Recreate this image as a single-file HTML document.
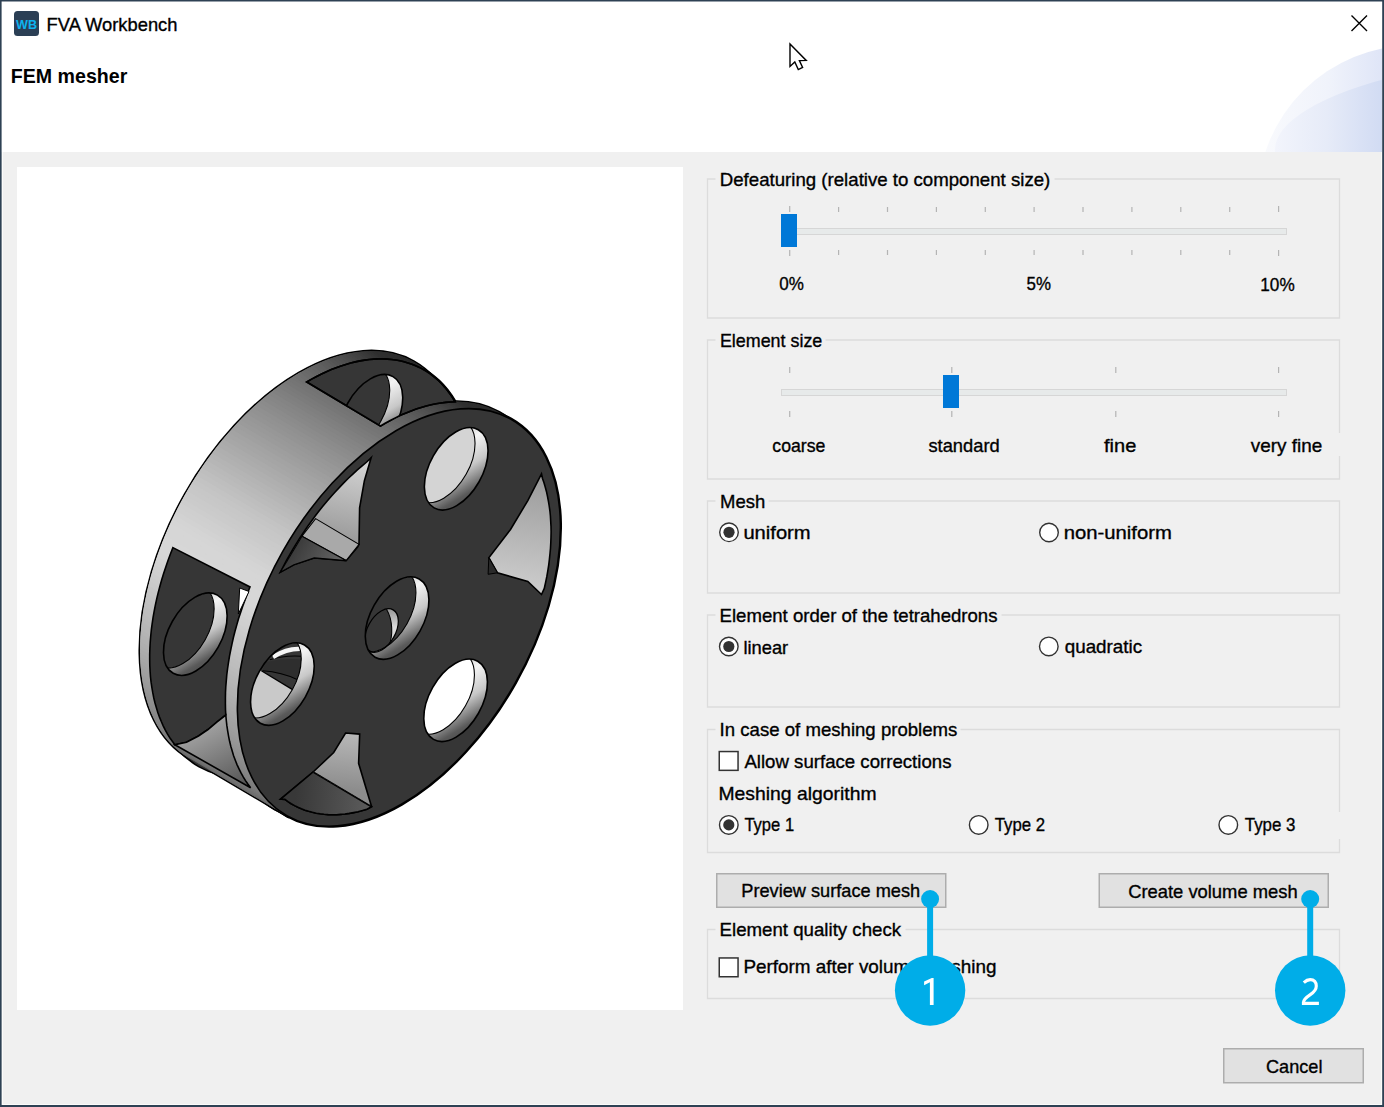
<!DOCTYPE html>
<html><head><meta charset="utf-8"><title>FEM mesher</title>
<style>html,body{margin:0;padding:0;background:#f0f0f0;} svg{display:block;} text{font-family:"Liberation Sans",sans-serif;}</style>
</head><body>
<svg width="1384" height="1107" viewBox="0 0 1384 1107">
<rect x="0" y="0" width="1384" height="152" fill="#ffffff"/>
<defs>
<linearGradient id="decoA" gradientUnits="userSpaceOnUse" x1="1262" y1="0" x2="1382" y2="0"><stop offset="0" stop-color="#f9fafd"/><stop offset="0.55" stop-color="#f0f3fb"/><stop offset="1" stop-color="#dfe5f7"/></linearGradient>
<linearGradient id="decoB" gradientUnits="userSpaceOnUse" x1="1272" y1="0" x2="1382" y2="0"><stop offset="0" stop-color="#f3f5fc"/><stop offset="0.5" stop-color="#e6ebf8"/><stop offset="1" stop-color="#d1dbf3"/></linearGradient>
<clipPath id="hdrclip"><rect x="0" y="0" width="1382" height="152"/></clipPath>
</defs>
<g clip-path="url(#hdrclip)">
<ellipse cx="1413.7" cy="200" rx="156" ry="154.8" fill="url(#decoA)"/>
<ellipse cx="1700" cy="150" rx="425" ry="106" fill="url(#decoB)"/>
</g>
<rect x="0" y="152" width="1384" height="955" fill="#f0f0f0"/>
<rect x="0" y="0" width="1384" height="1.5" fill="#2e4154"/>
<rect x="2" y="152" width="1" height="953" fill="#fbfbfa"/>
<rect x="1381" y="152" width="1" height="953" fill="#fbfbfa"/>
<rect x="2" y="1104" width="1380" height="1" fill="#fbfbfa"/>
<rect x="0" y="0" width="1.6" height="1107" fill="#2e4154"/>
<rect x="1382.2" y="0" width="1.8" height="1107" fill="#2e4154"/>
<rect x="0" y="1105" width="1384" height="2" fill="#2e4154"/>
<rect x="14" y="11" width="25" height="25" rx="3.5" fill="#2b3f55"/>
<text x="16" y="29.2" font-size="13" font-weight="700" fill="#0db3ef" textLength="21" lengthAdjust="spacingAndGlyphs">WB</text>
<text x="46.6" y="31.0" font-size="19" font-weight="400" fill="#000" stroke="#000" stroke-width="0.35" textLength="130.9" lengthAdjust="spacingAndGlyphs">FVA Workbench</text>
<path d="M1351.5 15.5 L1367 31 M1367 15.5 L1351.5 31" stroke="#000" stroke-width="1.4" fill="none"/>
<text x="10.8" y="82.5" font-size="21" font-weight="700" fill="#000" stroke="#000" stroke-width="0.0" textLength="116.5" lengthAdjust="spacingAndGlyphs">FEM mesher</text>
<rect x="17" y="167" width="666" height="843" fill="#ffffff"/>
<g id="model"><defs><linearGradient id="lwin" gradientUnits="userSpaceOnUse" x1="200" y1="722" x2="235" y2="790"><stop offset="0" stop-color="#a8a8a8"/><stop offset="1" stop-color="#565656"/></linearGradient><clipPath id="tcclip"><path d="M306.7 382.0 L311.6 379.1 L316.6 376.5 L321.5 374.0 L326.4 371.7 L331.3 369.6 L336.1 367.7 L341.0 366.0 L345.8 364.4 L350.6 363.1 L355.3 361.9 L360.1 360.9 L364.7 360.1 L369.3 359.5 L373.9 359.1 L378.4 358.9 L382.8 358.9 L387.2 359.1 L391.5 359.5 L395.8 360.0 L399.9 360.8 L404.0 361.7 L408.0 362.9 L411.9 364.2 L415.7 365.7 L419.4 367.4 L423.0 369.3 L426.5 371.4 L429.9 373.7 L433.1 376.1 L436.3 378.7 L439.4 381.5 L442.3 384.5 L445.1 387.6 L447.8 390.9 L450.4 394.4 L452.8 398.0 L455.1 401.8 L455.1 401.8 L450.5 402.0 L445.7 402.4 L440.9 403.0 L436.1 403.8 L431.2 404.8 L426.2 406.0 L421.2 407.4 L416.2 409.0 L411.1 410.9 L406.1 412.9 L401.0 415.1 L395.8 417.6 L390.7 420.2 L385.6 423.0 L380.5 426.0 Z"/></clipPath><clipPath id="h1c"><ellipse cx="370.9" cy="415.7" rx="44.9" ry="26.3" transform="rotate(-60.5 370.9 415.7)" fill="#fff" stroke="none" stroke-width="0"/></clipPath><linearGradient id="h1g" gradientUnits="userSpaceOnUse" x1="393.0" y1="376.7" x2="348.8" y2="454.7"><stop offset="0" stop-color="#b0b0b0"/><stop offset="0.3" stop-color="#f4f4f4"/><stop offset="0.55" stop-color="#c8c8c8"/><stop offset="0.8" stop-color="#5a5a5a"/><stop offset="1" stop-color="#3c3c3c"/></linearGradient><clipPath id="lcclip"><path d="M172.9 547.6 L250.0 587.0 L247.5 593.3 L245.1 599.6 L242.8 605.9 L240.7 612.3 L238.6 618.6 L236.8 624.9 L235.0 631.2 L233.4 637.5 L232.0 643.8 L230.7 650.0 L229.5 656.2 L228.5 662.4 L227.6 668.5 L226.8 674.6 L226.3 680.6 L225.8 686.5 L225.5 692.4 L225.4 698.2 L225.4 703.9 L225.5 709.5 L225.8 715.0 L216.5 722.3 L208.0 729.5 L198.5 736.0 L186.5 742.2 L174.9 744.8 L172.3 741.3 L169.8 737.7 L167.4 733.9 L165.2 729.9 L163.2 725.8 L161.3 721.5 L159.5 717.1 L157.8 712.5 L156.4 707.8 L155.0 703.0 L153.8 698.0 L152.8 692.9 L151.9 687.7 L151.1 682.4 L150.5 677.0 L150.1 671.4 L149.8 665.8 L149.7 660.1 L149.7 654.3 L149.9 648.4 L150.2 642.4 L150.7 636.3 L151.3 630.2 L152.1 624.1 L153.0 617.9 L154.1 611.6 L155.3 605.3 L156.7 598.9 L158.2 592.6 L159.9 586.2 L161.7 579.7 L163.7 573.3 L165.8 566.9 L168.0 560.5 L170.4 554.0 L172.9 547.6 Z"/></clipPath><clipPath id="h2c"><ellipse cx="195.3" cy="634.2" rx="44.9" ry="26.3" transform="rotate(-60.5 195.3 634.2)" fill="#fff" stroke="none" stroke-width="0"/></clipPath><linearGradient id="h2g" gradientUnits="userSpaceOnUse" x1="217.4" y1="595.2" x2="173.2" y2="673.2"><stop offset="0" stop-color="#b0b0b0"/><stop offset="0.3" stop-color="#f4f4f4"/><stop offset="0.55" stop-color="#c8c8c8"/><stop offset="0.8" stop-color="#5a5a5a"/><stop offset="1" stop-color="#3c3c3c"/></linearGradient><linearGradient id="wul" gradientUnits="userSpaceOnUse" x1="368" y1="462" x2="350" y2="545"><stop offset="0" stop-color="#d4d4d4"/><stop offset="1" stop-color="#989898"/></linearGradient><linearGradient id="wuld" gradientUnits="userSpaceOnUse" x1="295" y1="545" x2="335" y2="568"><stop offset="0" stop-color="#3a3a3a"/><stop offset="1" stop-color="#646464"/></linearGradient><linearGradient id="wr" gradientUnits="userSpaceOnUse" x1="540" y1="475" x2="520" y2="590"><stop offset="0" stop-color="#9a9a9a"/><stop offset="1" stop-color="#cdcdcd"/></linearGradient><linearGradient id="wb" gradientUnits="userSpaceOnUse" x1="350" y1="735" x2="345" y2="790"><stop offset="0" stop-color="#b6b6b6"/><stop offset="1" stop-color="#8c8c8c"/></linearGradient><linearGradient id="wbd" gradientUnits="userSpaceOnUse" x1="295" y1="800" x2="370" y2="805"><stop offset="0" stop-color="#383838"/><stop offset="1" stop-color="#5c5c5c"/></linearGradient><clipPath id="h3c"><ellipse cx="456.2" cy="468.8" rx="44.9" ry="26.3" transform="rotate(-60.5 456.2 468.8)" fill="#fff" stroke="none" stroke-width="0"/></clipPath><linearGradient id="h3g" gradientUnits="userSpaceOnUse" x1="478.3" y1="429.8" x2="434.1" y2="507.8"><stop offset="0" stop-color="#b0b0b0"/><stop offset="0.3" stop-color="#f4f4f4"/><stop offset="0.55" stop-color="#c8c8c8"/><stop offset="0.8" stop-color="#5a5a5a"/><stop offset="1" stop-color="#3c3c3c"/></linearGradient><clipPath id="h4c"><ellipse cx="455.6" cy="700.3" rx="44.9" ry="26.3" transform="rotate(-60.5 455.6 700.3)" fill="#fff" stroke="none" stroke-width="0"/></clipPath><linearGradient id="h4g" gradientUnits="userSpaceOnUse" x1="477.7" y1="661.3" x2="433.5" y2="739.3"><stop offset="0" stop-color="#b0b0b0"/><stop offset="0.3" stop-color="#f4f4f4"/><stop offset="0.55" stop-color="#c8c8c8"/><stop offset="0.8" stop-color="#5a5a5a"/><stop offset="1" stop-color="#3c3c3c"/></linearGradient><clipPath id="cic"><ellipse cx="381.5" cy="630.5" rx="23.7" ry="13.9" transform="rotate(-60.5 381.5 630.5)" fill="#fff" stroke="none" stroke-width="0"/></clipPath><linearGradient id="cig" gradientUnits="userSpaceOnUse" x1="392" y1="610" x2="392" y2="646"><stop offset="0" stop-color="#9a9a9a"/><stop offset="0.5" stop-color="#dedede"/><stop offset="1" stop-color="#c8c8c8"/></linearGradient><clipPath id="h5c"><ellipse cx="397.1" cy="618.1" rx="44.9" ry="26.3" transform="rotate(-60.5 397.1 618.1)" fill="#fff" stroke="none" stroke-width="0"/></clipPath><linearGradient id="h5g" gradientUnits="userSpaceOnUse" x1="419.2" y1="579.1" x2="375.0" y2="657.1"><stop offset="0" stop-color="#b0b0b0"/><stop offset="0.3" stop-color="#f4f4f4"/><stop offset="0.55" stop-color="#c8c8c8"/><stop offset="0.8" stop-color="#5a5a5a"/><stop offset="1" stop-color="#3c3c3c"/></linearGradient><clipPath id="h5bc"><ellipse cx="384.1" cy="610.7" rx="44.9" ry="26.3" transform="rotate(-60.5 384.1 610.7)" fill="#fff" stroke="none" stroke-width="0"/></clipPath><clipPath id="h6c"><ellipse cx="282.4" cy="684.1" rx="44.9" ry="26.3" transform="rotate(-60.5 282.4 684.1)" fill="#fff" stroke="none" stroke-width="0"/></clipPath><linearGradient id="h6g" gradientUnits="userSpaceOnUse" x1="304.5" y1="645.1" x2="260.3" y2="723.1"><stop offset="0" stop-color="#b0b0b0"/><stop offset="0.3" stop-color="#f4f4f4"/><stop offset="0.55" stop-color="#c8c8c8"/><stop offset="0.8" stop-color="#5a5a5a"/><stop offset="1" stop-color="#3c3c3c"/></linearGradient><clipPath id="h6bc"><ellipse cx="269.4" cy="676.7" rx="44.9" ry="26.3" transform="rotate(-60.5 269.4 676.7)" fill="#fff" stroke="none" stroke-width="0"/></clipPath></defs>
<ellipse cx="301.6" cy="560.0" rx="227.7" ry="133.6" transform="rotate(-60.5 301.6 560.0)" fill="#000" stroke="#000" stroke-width="3.2"/>
<ellipse cx="311.2" cy="567.7" rx="227.7" ry="133.6" transform="rotate(-60.5 311.2 567.7)" fill="#000" stroke="#000" stroke-width="3.2"/>
<ellipse cx="386.9" cy="610.6" rx="227.7" ry="133.6" transform="rotate(-60.5 386.9 610.6)" fill="#000" stroke="#000" stroke-width="3.2"/>
<ellipse cx="398.9" cy="617.4" rx="227.7" ry="133.6" transform="rotate(-60.5 398.9 617.4)" fill="#000" stroke="#000" stroke-width="3.2"/>
<path d="M190.6 758.8 L287.9 816.2 L398.9 617.4 L301.6 560.0 Z" fill="#000" stroke="#000" stroke-width="3.2"/>
<ellipse cx="301.6" cy="560.0" rx="227.7" ry="133.6" transform="rotate(-60.5 301.6 560.0)" fill="#363636" stroke="none" stroke-width="0"/>
<ellipse cx="311.2" cy="567.7" rx="227.7" ry="133.6" transform="rotate(-60.5 311.2 567.7)" fill="#363636" stroke="none" stroke-width="0"/>
<ellipse cx="386.9" cy="610.6" rx="227.7" ry="133.6" transform="rotate(-60.5 386.9 610.6)" fill="#363636" stroke="none" stroke-width="0"/>
<ellipse cx="398.9" cy="617.4" rx="227.7" ry="133.6" transform="rotate(-60.5 398.9 617.4)" fill="#363636" stroke="none" stroke-width="0"/>
<path d="M190.6 758.8 L287.9 816.2 L398.9 617.4 L301.6 560.0 Z" fill="#363636"/>
<polygon points="190.6,758.8 186.0,756.1 283.3,813.5 287.9,816.2" fill="#666666"/>
<polygon points="188.3,757.5 183.8,754.7 281.1,812.1 285.6,814.9" fill="#686868"/>
<polygon points="186.0,756.1 181.6,753.1 278.9,810.5 283.3,813.5" fill="#6a6a6a"/>
<polygon points="183.8,754.7 179.5,751.5 276.8,808.9 281.1,812.1" fill="#6b6b6b"/>
<polygon points="181.6,753.1 177.4,749.8 274.7,807.2 278.9,810.5" fill="#6d6d6d"/>
<polygon points="179.5,751.5 175.4,748.0 272.7,805.4 276.8,808.9" fill="#6e6e6e"/>
<polygon points="177.4,749.8 173.4,746.1 270.7,803.5 274.7,807.2" fill="#707070"/>
<polygon points="175.4,748.0 171.4,744.2 268.7,801.6 272.7,805.4" fill="#717171"/>
<polygon points="173.4,746.1 169.6,742.2 266.9,799.6 270.7,803.5" fill="#737373"/>
<polygon points="171.4,744.2 167.7,740.1 265.0,797.5 268.7,801.6" fill="#747474"/>
<polygon points="169.6,742.2 165.9,738.0 263.2,795.4 266.9,799.6" fill="#767676"/>
<polygon points="167.7,740.1 164.2,735.8 261.5,793.2 265.0,797.5" fill="#787878"/>
<polygon points="165.9,738.0 162.6,733.5 259.9,790.9 263.2,795.4" fill="#797979"/>
<polygon points="164.2,735.8 160.9,731.1 258.2,788.5 261.5,793.2" fill="#7b7b7b"/>
<polygon points="162.6,733.5 159.4,728.7 256.7,786.1 259.9,790.9" fill="#7c7c7c"/>
<polygon points="160.9,731.1 157.9,726.2 255.2,783.6 258.2,788.5" fill="#7e7e7e"/>
<polygon points="159.4,728.7 156.4,723.7 253.7,781.1 256.7,786.1" fill="#7f7f7f"/>
<polygon points="157.9,726.2 155.1,721.1 252.4,778.5 255.2,783.6" fill="#818181"/>
<polygon points="156.4,723.7 153.7,718.4 251.0,775.8 253.7,781.1" fill="#838383"/>
<polygon points="155.1,721.1 152.5,715.6 249.8,773.0 252.4,778.5" fill="#848484"/>
<polygon points="153.7,718.4 151.2,712.8 248.5,770.2 251.0,775.8" fill="#868686"/>
<polygon points="152.5,715.6 150.1,709.9 247.4,767.3 249.8,773.0" fill="#878787"/>
<polygon points="151.2,712.8 149.0,707.0 246.3,764.4 248.5,770.2" fill="#898989"/>
<polygon points="150.1,709.9 148.0,704.0 245.3,761.4 247.4,767.3" fill="#8b8b8b"/>
<polygon points="149.0,707.0 147.0,701.0 244.3,758.4 246.3,764.4" fill="#8d8d8d"/>
<polygon points="148.0,704.0 146.1,697.9 243.4,755.3 245.3,761.4" fill="#8f8f8f"/>
<polygon points="147.0,701.0 145.3,694.7 242.6,752.1 244.3,758.4" fill="#909090"/>
<polygon points="146.1,697.9 144.5,691.5 241.8,748.9 243.4,755.3" fill="#929292"/>
<polygon points="145.3,694.7 143.8,688.2 241.1,745.6 242.6,752.1" fill="#949494"/>
<polygon points="144.5,691.5 143.1,684.9 240.4,742.3 241.8,748.9" fill="#969696"/>
<polygon points="143.8,688.2 142.5,681.5 239.8,738.9 241.1,745.6" fill="#989898"/>
<polygon points="143.1,684.9 142.0,678.1 239.3,735.5 240.4,742.3" fill="#9a9a9a"/>
<polygon points="142.5,681.5 141.5,674.7 238.8,732.1 239.8,738.9" fill="#9c9c9c"/>
<polygon points="142.0,678.1 141.1,671.1 238.4,728.5 239.3,735.5" fill="#9e9e9e"/>
<polygon points="141.5,674.7 140.8,667.6 238.1,725.0 238.8,732.1" fill="#a0a0a0"/>
<polygon points="141.1,671.1 140.5,664.0 237.8,721.4 238.4,728.5" fill="#a1a1a1"/>
<polygon points="140.8,667.6 140.3,660.4 237.6,717.8 238.1,725.0" fill="#a3a3a3"/>
<polygon points="140.5,664.0 140.2,656.7 237.5,714.1 237.8,721.4" fill="#a5a5a5"/>
<polygon points="140.3,660.4 140.1,653.0 237.4,710.4 237.6,717.8" fill="#a7a7a7"/>
<polygon points="140.2,656.7 140.1,649.2 237.4,706.6 237.5,714.1" fill="#a9a9a9"/>
<polygon points="140.1,653.0 140.1,645.4 237.4,702.8 237.4,710.4" fill="#ababab"/>
<polygon points="140.1,649.2 140.2,641.6 237.5,699.0 237.4,706.6" fill="#adadad"/>
<polygon points="140.1,645.4 140.4,637.8 237.7,695.2 237.4,702.8" fill="#afafaf"/>
<polygon points="140.2,641.6 140.7,633.9 238.0,691.3 237.5,699.0" fill="#b1b1b1"/>
<polygon points="140.4,637.8 141.0,630.0 238.3,687.4 237.7,695.2" fill="#b2b2b2"/>
<polygon points="140.7,633.9 141.3,626.0 238.6,683.4 238.0,691.3" fill="#b4b4b4"/>
<polygon points="141.0,630.0 141.8,622.0 239.1,679.4 238.3,687.4" fill="#b6b6b6"/>
<polygon points="141.3,626.0 142.3,618.0 239.6,675.4 238.6,683.4" fill="#b7b7b7"/>
<polygon points="141.8,622.0 142.8,614.0 240.1,671.4 239.1,679.4" fill="#b9b9b9"/>
<polygon points="142.3,618.0 143.4,610.0 240.7,667.4 239.6,675.4" fill="#bbbbbb"/>
<polygon points="142.8,614.0 144.1,605.9 241.4,663.3 240.1,671.4" fill="#bdbdbd"/>
<polygon points="143.4,610.0 144.9,601.9 242.2,659.3 240.7,667.4" fill="#bebebe"/>
<polygon points="144.1,605.9 145.7,597.8 243.0,655.2 241.4,663.3" fill="#c0c0c0"/>
<polygon points="144.9,601.9 146.6,593.7 243.9,651.1 242.2,659.3" fill="#c2c2c2"/>
<polygon points="145.7,597.8 147.5,589.5 244.8,646.9 243.0,655.2" fill="#c4c4c4"/>
<polygon points="146.6,593.7 148.5,585.4 245.8,642.8 243.9,651.1" fill="#c6c6c6"/>
<polygon points="147.5,589.5 149.6,581.3 246.9,638.7 244.8,646.9" fill="#c7c7c7"/>
<polygon points="148.5,585.4 150.7,577.1 248.0,634.5 245.8,642.8" fill="#c9c9c9"/>
<polygon points="149.6,581.3 151.9,572.9 249.2,630.3 246.9,638.7" fill="#cbcbcb"/>
<polygon points="150.7,577.1 153.1,568.8 250.4,626.2 248.0,634.5" fill="#cdcdcd"/>
<polygon points="151.9,572.9 154.4,564.6 251.7,622.0 249.2,630.3" fill="#cfcfcf"/>
<polygon points="153.1,568.8 155.8,560.4 253.1,617.8 250.4,626.2" fill="#d0d0d0"/>
<polygon points="154.4,564.6 157.2,556.3 254.5,613.7 251.7,622.0" fill="#d2d2d2"/>
<polygon points="155.8,560.4 158.7,552.1 256.0,609.5 253.1,617.8" fill="#d4d4d4"/>
<polygon points="157.2,556.3 160.2,547.9 257.5,605.3 254.5,613.7" fill="#d6d6d6"/>
<polygon points="158.7,552.1 161.8,543.8 259.1,601.2 256.0,609.5" fill="#d7d7d7"/>
<polygon points="160.2,547.9 163.4,539.6 260.7,597.0 257.5,605.3" fill="#d7d7d7"/>
<polygon points="161.8,543.8 165.1,535.5 262.4,592.9 259.1,601.2" fill="#d7d7d7"/>
<polygon points="163.4,539.6 166.9,531.3 264.2,588.7 260.7,597.0" fill="#d7d7d7"/>
<polygon points="165.1,535.5 168.7,527.2 266.0,584.6 262.4,592.9" fill="#d6d6d6"/>
<polygon points="166.9,531.3 170.5,523.1 267.8,580.5 264.2,588.7" fill="#d6d6d6"/>
<polygon points="168.7,527.2 172.5,519.0 269.8,576.4 266.0,584.6" fill="#d6d6d6"/>
<polygon points="170.5,523.1 174.4,514.9 271.7,572.3 267.8,580.5" fill="#d5d5d5"/>
<polygon points="172.5,519.0 176.4,510.9 273.7,568.3 269.8,576.4" fill="#d4d4d4"/>
<polygon points="174.4,514.9 178.5,506.8 275.8,564.2 271.7,572.3" fill="#d2d2d2"/>
<polygon points="176.4,510.9 180.6,502.8 277.9,560.2 273.7,568.3" fill="#d0d0d0"/>
<polygon points="178.5,506.8 182.8,498.8 280.1,556.2 275.8,564.2" fill="#cfcfcf"/>
<polygon points="180.6,502.8 185.0,494.8 282.3,552.2 277.9,560.2" fill="#cdcdcd"/>
<polygon points="182.8,498.8 187.2,490.9 284.5,548.3 280.1,556.2" fill="#cbcbcb"/>
<polygon points="185.0,494.8 189.5,486.9 286.8,544.3 282.3,552.2" fill="#cacaca"/>
<polygon points="187.2,490.9 191.9,483.1 289.2,540.5 284.5,548.3" fill="#c8c8c8"/>
<polygon points="189.5,486.9 194.3,479.2 291.6,536.6 286.8,544.3" fill="#c7c7c7"/>
<polygon points="191.9,483.1 196.7,475.4 294.0,532.8 289.2,540.5" fill="#c5c5c5"/>
<polygon points="194.3,479.2 199.2,471.6 296.5,529.0 291.6,536.6" fill="#c3c3c3"/>
<polygon points="196.7,475.4 201.7,467.8 299.0,525.2 294.0,532.8" fill="#c0c0c0"/>
<polygon points="199.2,471.6 204.2,464.1 301.5,521.5 296.5,529.0" fill="#bebebe"/>
<polygon points="201.7,467.8 206.8,460.4 304.1,517.8 299.0,525.2" fill="#bbbbbb"/>
<polygon points="204.2,464.1 209.5,456.8 306.8,514.2 301.5,521.5" fill="#b9b9b9"/>
<polygon points="206.8,460.4 212.1,453.2 309.4,510.6 304.1,517.8" fill="#b6b6b6"/>
<polygon points="209.5,456.8 214.8,449.6 312.1,507.0 306.8,514.2" fill="#b4b4b4"/>
<polygon points="212.1,453.2 217.6,446.1 314.9,503.5 309.4,510.6" fill="#b1b1b1"/>
<polygon points="214.8,449.6 220.4,442.6 317.7,500.0 312.1,507.0" fill="#afafaf"/>
<polygon points="217.6,446.1 223.2,439.2 320.5,496.6 314.9,503.5" fill="#acacac"/>
<polygon points="220.4,442.6 226.0,435.8 323.3,493.2 317.7,500.0" fill="#aaaaaa"/>
<polygon points="223.2,439.2 228.9,432.5 326.2,489.9 320.5,496.6" fill="#a7a7a7"/>
<polygon points="226.0,435.8 231.8,429.2 329.1,486.6 323.3,493.2" fill="#a5a5a5"/>
<polygon points="228.9,432.5 234.7,426.0 332.0,483.4 326.2,489.9" fill="#a3a3a3"/>
<polygon points="231.8,429.2 237.6,422.8 334.9,480.2 329.1,486.6" fill="#a0a0a0"/>
<polygon points="234.7,426.0 240.6,419.7 337.9,477.1 332.0,483.4" fill="#9e9e9e"/>
<polygon points="237.6,422.8 243.6,416.6 340.9,474.0 334.9,480.2" fill="#9b9b9b"/>
<polygon points="240.6,419.7 246.6,413.6 343.9,471.0 337.9,477.1" fill="#999999"/>
<polygon points="243.6,416.6 249.7,410.7 347.0,468.1 340.9,474.0" fill="#979797"/>
<polygon points="246.6,413.6 252.7,407.8 350.0,465.2 343.9,471.0" fill="#949494"/>
<polygon points="249.7,410.7 255.8,405.0 353.1,462.4 347.0,468.1" fill="#929292"/>
<polygon points="252.7,407.8 258.9,402.2 356.2,459.6 350.0,465.2" fill="#909090"/>
<polygon points="255.8,405.0 262.0,399.5 359.3,456.9 353.1,462.4" fill="#8d8d8d"/>
<polygon points="258.9,402.2 265.2,396.9 362.5,454.3 356.2,459.6" fill="#8b8b8b"/>
<polygon points="262.0,399.5 268.3,394.3 365.6,451.7 359.3,456.9" fill="#888888"/>
<polygon points="265.2,396.9 271.5,391.8 368.8,449.2 362.5,454.3" fill="#868686"/>
<polygon points="268.3,394.3 274.7,389.4 372.0,446.8 365.6,451.7" fill="#848484"/>
<polygon points="271.5,391.8 277.8,387.0 375.1,444.4 368.8,449.2" fill="#818181"/>
<polygon points="274.7,389.4 281.0,384.7 378.3,442.1 372.0,446.8" fill="#7f7f7f"/>
<polygon points="277.8,387.0 284.2,382.5 381.5,439.9 375.1,444.4" fill="#7c7c7c"/>
<polygon points="281.0,384.7 287.5,380.3 384.8,437.7 378.3,442.1" fill="#7a7a7a"/>
<polygon points="284.2,382.5 290.7,378.2 388.0,435.6 381.5,439.9" fill="#777777"/>
<polygon points="287.5,380.3 293.9,376.2 391.2,433.6 384.8,437.7" fill="#757575"/>
<polygon points="290.7,378.2 297.1,374.3 394.4,431.7 388.0,435.6" fill="#737373"/>
<polygon points="293.9,376.2 300.3,372.4 397.6,429.8 391.2,433.6" fill="#707070"/>
<polygon points="297.1,374.3 300.3,372.4 397.6,429.8 394.4,431.7" fill="#6e6e6e"/>
<polygon points="293.9,376.2 300.3,372.4 309.9,380.1 303.5,383.9" fill="#707070"/>
<polygon points="297.1,374.3 303.4,370.7 313.0,378.4 306.7,382.0" fill="#6e6e6e"/>
<polygon points="300.3,372.4 306.6,369.0 316.2,376.7 309.9,380.1" fill="#6b6b6b"/>
<polygon points="303.4,370.7 309.8,367.3 319.4,375.0 313.0,378.4" fill="#696969"/>
<polygon points="306.6,369.0 313.0,365.8 322.6,373.5 316.2,376.7" fill="#666666"/>
<polygon points="309.8,367.3 316.2,364.3 325.8,372.0 319.4,375.0" fill="#646464"/>
<polygon points="313.0,365.8 319.4,362.9 329.0,370.6 322.6,373.5" fill="#616161"/>
<polygon points="316.2,364.3 322.5,361.6 332.1,369.3 325.8,372.0" fill="#5f5f5f"/>
<polygon points="319.4,362.9 325.7,360.3 335.3,368.0 329.0,370.6" fill="#5c5c5c"/>
<polygon points="322.5,361.6 328.8,359.2 338.4,366.9 332.1,369.3" fill="#5a5a5a"/>
<polygon points="325.7,360.3 332.0,358.1 341.6,365.8 335.3,368.0" fill="#575757"/>
<polygon points="328.8,359.2 335.1,357.1 344.7,364.8 338.4,366.9" fill="#545454"/>
<polygon points="332.0,358.1 338.2,356.1 347.8,363.8 341.6,365.8" fill="#525252"/>
<polygon points="335.1,357.1 341.3,355.3 350.9,363.0 344.7,364.8" fill="#4f4f4f"/>
<polygon points="338.2,356.1 344.4,354.5 354.0,362.2 347.8,363.8" fill="#4d4d4d"/>
<polygon points="341.3,355.3 347.5,353.8 357.1,361.5 350.9,363.0" fill="#4a4a4a"/>
<polygon points="344.4,354.5 350.5,353.2 360.1,360.9 354.0,362.2" fill="#474747"/>
<polygon points="347.5,353.8 353.5,352.7 363.1,360.4 357.1,361.5" fill="#454545"/>
<polygon points="350.5,353.2 356.5,352.2 366.1,359.9 360.1,360.9" fill="#424242"/>
<polygon points="353.5,352.7 359.5,351.9 369.1,359.6 363.1,360.4" fill="#404040"/>
<polygon points="356.5,352.2 362.5,351.6 372.1,359.3 366.1,359.9" fill="#3d3d3d"/>
<polygon points="359.5,351.9 365.4,351.4 375.0,359.1 369.1,359.6" fill="#3a3a3a"/>
<polygon points="362.5,351.6 368.4,351.2 378.0,358.9 372.1,359.3" fill="#383838"/>
<polygon points="365.4,351.4 371.2,351.2 380.8,358.9 375.0,359.1" fill="#353535"/>
<polygon points="368.4,351.2 374.1,351.2 383.7,358.9 378.0,358.9" fill="#333333"/>
<polygon points="371.2,351.2 376.9,351.3 386.5,359.0 380.8,358.9" fill="#303030"/>
<polygon points="374.1,351.2 379.7,351.5 389.3,359.2 383.7,358.9" fill="#2f2f2f"/>
<polygon points="376.9,351.3 382.5,351.8 392.1,359.5 386.5,359.0" fill="#2f2f2f"/>
<polygon points="379.7,351.5 385.3,352.2 394.9,359.9 389.3,359.2" fill="#2e2e2e"/>
<polygon points="382.5,351.8 388.0,352.6 397.6,360.3 392.1,359.5" fill="#2e2e2e"/>
<polygon points="385.3,352.2 390.7,353.1 400.3,360.8 394.9,359.9" fill="#2d2d2d"/>
<polygon points="388.0,352.6 393.3,353.8 402.9,361.5 397.6,360.3" fill="#2d2d2d"/>
<polygon points="390.7,353.1 395.9,354.4 405.5,362.1 400.3,360.8" fill="#2c2c2c"/>
<polygon points="393.3,353.8 398.5,355.2 408.1,362.9 402.9,361.5" fill="#2c2c2c"/>
<polygon points="395.9,354.4 401.0,356.0 410.6,363.7 405.5,362.1" fill="#2b2b2b"/>
<polygon points="398.5,355.2 403.5,357.0 413.1,364.7 408.1,362.9" fill="#2b2b2b"/>
<polygon points="401.0,356.0 406.0,358.0 415.6,365.7 410.6,363.7" fill="#2a2a2a"/>
<polygon points="403.5,357.0 408.4,359.1 418.0,366.8 413.1,364.7" fill="#2a2a2a"/>
<polygon points="406.0,358.0 410.7,360.2 420.3,367.9 415.6,365.7" fill="#292929"/>
<polygon points="408.4,359.1 413.1,361.5 422.7,369.2 418.0,366.8" fill="#292929"/>
<polygon points="410.7,360.2 415.4,362.8 425.0,370.5 420.3,367.9" fill="#282828"/>
<polygon points="413.1,361.5 417.6,364.2 427.2,371.9 422.7,369.2" fill="#282828"/>
<polygon points="415.4,362.8 419.8,365.6 429.4,373.3 425.0,370.5" fill="#282828"/>
<polygon points="417.6,364.2 421.9,367.2 431.5,374.9 427.2,371.9" fill="#282828"/>
<polygon points="419.8,365.6 424.0,368.8 433.6,376.5 429.4,373.3" fill="#282828"/>
<polygon points="421.9,367.2 426.1,370.5 435.7,378.2 431.5,374.9" fill="#282828"/>
<polygon points="424.0,368.8 428.1,372.3 437.7,380.0 433.6,376.5" fill="#282828"/>
<polygon points="426.1,370.5 430.1,374.1 439.7,381.8 435.7,378.2" fill="#282828"/>
<polygon points="428.1,372.3 432.0,376.0 441.6,383.7 437.7,380.0" fill="#282828"/>
<polygon points="430.1,374.1 433.8,378.0 443.4,385.7 439.7,381.8" fill="#282828"/>
<polygon points="432.0,376.0 435.6,380.1 445.2,387.8 441.6,383.7" fill="#282828"/>
<polygon points="433.8,378.0 437.4,382.2 447.0,389.9 443.4,385.7" fill="#282828"/>
<polygon points="435.6,380.1 439.1,384.4 448.7,392.1 445.2,387.8" fill="#282828"/>
<polygon points="437.4,382.2 440.7,386.6 450.3,394.3 447.0,389.9" fill="#282828"/>
<polygon points="439.1,384.4 442.3,389.0 451.9,396.7 448.7,392.1" fill="#282828"/>
<polygon points="440.7,386.6 443.9,391.4 453.5,399.1 450.3,394.3" fill="#282828"/>
<polygon points="442.3,389.0 445.4,393.8 455.0,401.5 451.9,396.7" fill="#282828"/>
<polygon points="443.9,391.4 445.4,393.8 455.0,401.5 453.5,399.1" fill="#282828"/>
<polygon points="379.2,426.8 385.6,423.0 397.6,429.8 391.2,433.6" fill="#707070"/>
<polygon points="382.4,424.9 388.8,421.2 400.8,428.0 394.4,431.7" fill="#6e6e6e"/>
<polygon points="385.6,423.0 392.0,419.5 404.0,426.3 397.6,429.8" fill="#6b6b6b"/>
<polygon points="388.8,421.2 395.2,417.9 407.2,424.7 400.8,428.0" fill="#696969"/>
<polygon points="392.0,419.5 398.4,416.3 410.4,423.1 404.0,426.3" fill="#666666"/>
<polygon points="395.2,417.9 401.6,414.8 413.6,421.6 407.2,424.7" fill="#646464"/>
<polygon points="398.4,416.3 404.8,413.4 416.8,420.2 410.4,423.1" fill="#616161"/>
<polygon points="401.6,414.8 408.0,412.1 420.0,418.9 413.6,421.6" fill="#5e5e5e"/>
<polygon points="404.8,413.4 411.2,410.8 423.2,417.6 416.8,420.2" fill="#5c5c5c"/>
<polygon points="408.0,412.1 414.4,409.7 426.4,416.5 420.0,418.9" fill="#595959"/>
<polygon points="411.2,410.8 417.5,408.6 429.5,415.4 423.2,417.6" fill="#575757"/>
<polygon points="414.4,409.7 420.7,407.6 432.7,414.4 426.4,416.5" fill="#545454"/>
<polygon points="417.5,408.6 423.8,406.6 435.8,413.4 429.5,415.4" fill="#525252"/>
<polygon points="420.7,407.6 426.9,405.8 438.9,412.6 432.7,414.4" fill="#4f4f4f"/>
<polygon points="423.8,406.6 430.0,405.0 442.0,411.8 435.8,413.4" fill="#4c4c4c"/>
<polygon points="426.9,405.8 433.1,404.3 445.1,411.1 438.9,412.6" fill="#4a4a4a"/>
<polygon points="430.0,405.0 436.2,403.7 448.2,410.5 442.0,411.8" fill="#474747"/>
<polygon points="433.1,404.3 439.2,403.2 451.2,410.0 445.1,411.1" fill="#454545"/>
<polygon points="436.2,403.7 442.3,402.8 454.3,409.6 448.2,410.5" fill="#424242"/>
<polygon points="439.2,403.2 445.3,402.4 457.3,409.2 451.2,410.0" fill="#3f3f3f"/>
<polygon points="442.3,402.8 448.2,402.1 460.2,408.9 454.3,409.6" fill="#3d3d3d"/>
<polygon points="445.3,402.4 451.2,401.9 463.2,408.7 457.3,409.2" fill="#3a3a3a"/>
<polygon points="448.2,402.1 454.1,401.8 466.1,408.6 460.2,408.9" fill="#373737"/>
<polygon points="451.2,401.9 457.0,401.8 469.0,408.6 463.2,408.7" fill="#353535"/>
<polygon points="454.1,401.8 459.9,401.8 471.9,408.6 466.1,408.6" fill="#323232"/>
<polygon points="457.0,401.8 462.8,402.0 474.8,408.8 469.0,408.6" fill="#303030"/>
<polygon points="459.9,401.8 465.6,402.2 477.6,409.0 471.9,408.6" fill="#2f2f2f"/>
<polygon points="462.8,402.0 468.4,402.5 480.4,409.3 474.8,408.8" fill="#2f2f2f"/>
<polygon points="465.6,402.2 471.1,402.9 483.1,409.7 477.6,409.0" fill="#2e2e2e"/>
<polygon points="468.4,402.5 473.9,403.3 485.9,410.1 480.4,409.3" fill="#2e2e2e"/>
<polygon points="471.1,402.9 476.5,403.9 488.5,410.7 483.1,409.7" fill="#2d2d2d"/>
<polygon points="473.9,403.3 479.2,404.5 491.2,411.3 485.9,410.1" fill="#2d2d2d"/>
<polygon points="476.5,403.9 481.8,405.2 493.8,412.0 488.5,410.7" fill="#2c2c2c"/>
<polygon points="479.2,404.5 484.4,406.0 496.4,412.8 491.2,411.3" fill="#2c2c2c"/>
<polygon points="481.8,405.2 486.9,406.9 498.9,413.7 493.8,412.0" fill="#2b2b2b"/>
<polygon points="484.4,406.0 489.4,407.8 501.4,414.6 496.4,412.8" fill="#2b2b2b"/>
<polygon points="486.9,406.9 491.9,408.9 503.9,415.7 498.9,413.7" fill="#2a2a2a"/>
<polygon points="489.4,407.8 494.3,410.0 506.3,416.8 501.4,414.6" fill="#2a2a2a"/>
<polygon points="491.9,408.9 496.7,411.2 508.7,418.0 503.9,415.7" fill="#292929"/>
<polygon points="494.3,410.0 499.0,412.4 511.0,419.2 506.3,416.8" fill="#292929"/>
<polygon points="496.7,411.2 499.0,412.4 511.0,419.2 508.7,418.0" fill="#282828"/>
<path d="M306.7 382.0 L311.6 379.1 L316.6 376.5 L321.5 374.0 L326.4 371.7 L331.3 369.6 L336.1 367.7 L341.0 366.0 L345.8 364.4 L350.6 363.1 L355.3 361.9 L360.1 360.9 L364.7 360.1 L369.3 359.5 L373.9 359.1 L378.4 358.9 L382.8 358.9 L387.2 359.1 L391.5 359.5 L395.8 360.0 L399.9 360.8 L404.0 361.7 L408.0 362.9 L411.9 364.2 L415.7 365.7 L419.4 367.4 L423.0 369.3 L426.5 371.4 L429.9 373.7 L433.1 376.1 L436.3 378.7 L439.4 381.5 L442.3 384.5 L445.1 387.6 L447.8 390.9 L450.4 394.4 L452.8 398.0 L455.1 401.8 L455.1 401.8 L450.5 402.0 L445.7 402.4 L440.9 403.0 L436.1 403.8 L431.2 404.8 L426.2 406.0 L421.2 407.4 L416.2 409.0 L411.1 410.9 L406.1 412.9 L401.0 415.1 L395.8 417.6 L390.7 420.2 L385.6 423.0 L380.5 426.0 Z" fill="#363636" stroke="#000" stroke-width="1.6"/>
<path d="M172.9 547.6 L250.0 587.0 L247.5 593.3 L245.1 599.6 L242.8 605.9 L240.7 612.3 L238.6 618.6 L236.8 624.9 L235.0 631.2 L233.4 637.5 L232.0 643.8 L230.7 650.0 L229.5 656.2 L228.5 662.4 L227.6 668.5 L226.8 674.6 L226.3 680.6 L225.8 686.5 L225.5 692.4 L225.4 698.2 L225.4 703.9 L225.5 709.5 L225.8 715.0 L216.5 722.3 L208.0 729.5 L198.5 736.0 L186.5 742.2 L174.9 744.8 L172.3 741.3 L169.8 737.7 L167.4 733.9 L165.2 729.9 L163.2 725.8 L161.3 721.5 L159.5 717.1 L157.8 712.5 L156.4 707.8 L155.0 703.0 L153.8 698.0 L152.8 692.9 L151.9 687.7 L151.1 682.4 L150.5 677.0 L150.1 671.4 L149.8 665.8 L149.7 660.1 L149.7 654.3 L149.9 648.4 L150.2 642.4 L150.7 636.3 L151.3 630.2 L152.1 624.1 L153.0 617.9 L154.1 611.6 L155.3 605.3 L156.7 598.9 L158.2 592.6 L159.9 586.2 L161.7 579.7 L163.7 573.3 L165.8 566.9 L168.0 560.5 L170.4 554.0 L172.9 547.6 Z" fill="#363636" stroke="#000" stroke-width="1.6"/>
<path d="M174.9 744.8 L186.5 742.2 L198.5 736.0 L208.0 729.5 L216.5 722.3 L225.8 715.0 L226.3 720.5 L226.9 725.9 L227.7 731.1 L228.6 736.3 L229.6 741.3 L230.8 746.2 L232.2 751.0 L233.6 755.7 L235.3 760.2 L237.0 764.6 L239.0 768.8 L241.0 772.9 L243.2 776.9 L245.5 780.6 L248.0 784.3 L250.6 787.7 Z" fill="url(#lwin)" stroke="#000" stroke-width="1.6"/>
<polygon points="239.7,588.0 249.0,591.5 238.3,614.0" fill="#ffffff" stroke="#000" stroke-width="1"/>
<g clip-path="url(#tcclip)">
<ellipse cx="370.9" cy="415.7" rx="44.9" ry="26.3" transform="rotate(-60.5 370.9 415.7)" fill="url(#h1g)" stroke="none" stroke-width="0"/>
<g clip-path="url(#h1c)">
<ellipse cx="357.9" cy="408.3" rx="44.9" ry="26.3" transform="rotate(-60.5 357.9 408.3)" fill="#363636" stroke="none" stroke-width="0"/>
<ellipse cx="357.9" cy="408.3" rx="44.9" ry="26.3" transform="rotate(-60.5 357.9 408.3)" fill="none" stroke="#000" stroke-width="1.1"/>
</g>
<ellipse cx="370.9" cy="415.7" rx="44.9" ry="26.3" transform="rotate(-60.5 370.9 415.7)" fill="none" stroke="#000" stroke-width="1.6"/>
</g>
<path d="M306.7 382.0 L311.6 379.1 L316.6 376.5 L321.5 374.0 L326.4 371.7 L331.3 369.6 L336.1 367.7 L341.0 366.0 L345.8 364.4 L350.6 363.1 L355.3 361.9 L360.1 360.9 L364.7 360.1 L369.3 359.5 L373.9 359.1 L378.4 358.9 L382.8 358.9 L387.2 359.1 L391.5 359.5 L395.8 360.0 L399.9 360.8 L404.0 361.7 L408.0 362.9 L411.9 364.2 L415.7 365.7 L419.4 367.4 L423.0 369.3 L426.5 371.4 L429.9 373.7 L433.1 376.1 L436.3 378.7 L439.4 381.5 L442.3 384.5 L445.1 387.6 L447.8 390.9 L450.4 394.4 L452.8 398.0 L455.1 401.8 L455.1 401.8 L450.5 402.0 L445.7 402.4 L440.9 403.0 L436.1 403.8 L431.2 404.8 L426.2 406.0 L421.2 407.4 L416.2 409.0 L411.1 410.9 L406.1 412.9 L401.0 415.1 L395.8 417.6 L390.7 420.2 L385.6 423.0 L380.5 426.0 Z" fill="none" stroke="#000" stroke-width="1.6"/>
<g clip-path="url(#lcclip)">
<ellipse cx="195.3" cy="634.2" rx="44.9" ry="26.3" transform="rotate(-60.5 195.3 634.2)" fill="url(#h2g)" stroke="none" stroke-width="0"/>
<g clip-path="url(#h2c)">
<ellipse cx="182.3" cy="626.8" rx="44.9" ry="26.3" transform="rotate(-60.5 182.3 626.8)" fill="#363636" stroke="none" stroke-width="0"/>
<ellipse cx="182.3" cy="626.8" rx="44.9" ry="26.3" transform="rotate(-60.5 182.3 626.8)" fill="none" stroke="#000" stroke-width="1.1"/>
</g>
<ellipse cx="195.3" cy="634.2" rx="44.9" ry="26.3" transform="rotate(-60.5 195.3 634.2)" fill="none" stroke="#000" stroke-width="1.6"/>
</g>
<ellipse cx="398.9" cy="617.4" rx="227.7" ry="133.6" transform="rotate(-60.5 398.9 617.4)" fill="#363636" stroke="#000" stroke-width="1.6"/>
<path d="M371.2 457.6 L364.4 480.7 L359.6 507.8 L359.0 544.4 L357.6 547.1 L346.1 560.6 L314.2 557.9 L293.9 564.7 L280.3 572.2 L283.4 566.4 L286.5 560.5 L289.8 554.7 L293.1 549.0 L296.5 543.3 L300.0 537.7 L303.7 532.2 L307.4 526.8 L311.2 521.5 L315.0 516.2 L319.0 511.0 L323.0 506.0 L327.2 501.0 L331.3 496.2 L335.6 491.5 L339.9 486.9 L344.2 482.4 L348.6 478.0 L353.1 473.8 L357.6 469.7 L362.1 465.8 L366.7 462.0 Z" fill="url(#wul)" stroke="#000" stroke-width="1.6"/>
<polygon points="315.6,518.6 359.0,544.4 346.1,560.6 302.0,536.2" fill="#a9a9a9" stroke="#000" stroke-width="1.1"/>
<path d="M302.0 536.2 L346.1 560.6 L314.2 557.9 L293.9 564.7 L280.3 572.2 Z" fill="url(#wuld)" stroke="#000" stroke-width="1.1"/>
<path d="M541.5 473.8 L527.8 500.6 L510.5 529.5 L488.8 557.7 L497.5 572.8 L527.8 581.5 L541.5 594.5 L544.3 588.4 L545.6 582.5 L546.8 576.7 L547.8 570.9 L548.7 565.1 L549.4 559.4 L550.0 553.7 L550.5 548.1 L550.8 542.6 L551.0 537.1 L551.1 531.7 L551.0 526.4 L550.7 521.1 L550.4 516.0 L549.9 510.9 L549.2 506.0 L548.4 501.1 L547.5 496.4 L546.5 491.7 L545.3 487.2 L544.0 482.8 L542.5 478.5 Z" fill="url(#wr)" stroke="#000" stroke-width="1.6"/>
<polygon points="488.8,557.7 488.1,574.3 497.5,572.8" fill="#2a2a2a" stroke="#000" stroke-width="1"/>
<path d="M345.6 733.0 L359.7 734.1 L358.6 763.3 L371.6 806.7 L366.9 809.3 L362.5 810.6 L358.0 811.7 L353.6 812.6 L349.2 813.4 L344.9 814.0 L340.6 814.4 L336.4 814.7 L332.3 814.7 L328.2 814.6 L324.1 814.3 L320.2 813.8 L316.3 813.2 L312.4 812.3 L308.7 811.3 L305.0 810.2 L301.4 808.8 L297.9 807.3 L294.6 805.6 L291.2 803.7 L288.0 801.6 L284.9 799.4 L280.6 799.1 L313.1 772.0 L333.7 752.5 Z" fill="url(#wb)" stroke="#000" stroke-width="1.6"/>
<path d="M313.1 772.0 L371.6 806.7 L366.9 809.3 L362.5 810.6 L358.0 811.7 L353.6 812.6 L349.2 813.4 L344.9 814.0 L340.6 814.4 L336.4 814.7 L332.3 814.7 L328.2 814.6 L324.1 814.3 L320.2 813.8 L316.3 813.2 L312.4 812.3 L308.7 811.3 L305.0 810.2 L301.4 808.8 L297.9 807.3 L294.6 805.6 L291.2 803.7 L288.0 801.6 L284.9 799.4 L280.6 799.1 Z" fill="url(#wbd)" stroke="#000" stroke-width="1.6"/>
<path d="M313.1 772.0 L371.6 806.7" stroke="#111" stroke-width="1.1" stroke-dasharray="1.6 2.4" fill="none"/>
<ellipse cx="456.2" cy="468.8" rx="44.9" ry="26.3" transform="rotate(-60.5 456.2 468.8)" fill="url(#h3g)" stroke="none" stroke-width="0"/>
<g clip-path="url(#h3c)">
<ellipse cx="443.2" cy="461.4" rx="44.9" ry="26.3" transform="rotate(-60.5 443.2 461.4)" fill="#d4d4d4" stroke="none" stroke-width="0"/>
<ellipse cx="443.2" cy="461.4" rx="44.9" ry="26.3" transform="rotate(-60.5 443.2 461.4)" fill="none" stroke="#000" stroke-width="1.1"/>
</g>
<ellipse cx="456.2" cy="468.8" rx="44.9" ry="26.3" transform="rotate(-60.5 456.2 468.8)" fill="none" stroke="#000" stroke-width="1.6"/>
<ellipse cx="455.6" cy="700.3" rx="44.9" ry="26.3" transform="rotate(-60.5 455.6 700.3)" fill="url(#h4g)" stroke="none" stroke-width="0"/>
<g clip-path="url(#h4c)">
<ellipse cx="442.6" cy="692.9" rx="44.9" ry="26.3" transform="rotate(-60.5 442.6 692.9)" fill="#ffffff" stroke="none" stroke-width="0"/>
<ellipse cx="442.6" cy="692.9" rx="44.9" ry="26.3" transform="rotate(-60.5 442.6 692.9)" fill="none" stroke="#000" stroke-width="1.1"/>
</g>
<ellipse cx="455.6" cy="700.3" rx="44.9" ry="26.3" transform="rotate(-60.5 455.6 700.3)" fill="none" stroke="#000" stroke-width="1.6"/>
<ellipse cx="397.1" cy="618.1" rx="44.9" ry="26.3" transform="rotate(-60.5 397.1 618.1)" fill="url(#h5g)" stroke="none" stroke-width="0"/>
<g clip-path="url(#h5c)">
<ellipse cx="384.1" cy="610.7" rx="44.9" ry="26.3" transform="rotate(-60.5 384.1 610.7)" fill="#363636" stroke="none" stroke-width="0"/>
<g clip-path="url(#h5bc)"><g clip-path="url(#cic)"><path d="M386.5 609.2 C394 606 406 617 406 626 C406 634 399 643 389 646 C393 636 393 620 386.5 609.2 Z" fill="url(#cig)" stroke="none"/><path d="M386.5 609.2 C393 620 393 636 389 646" fill="none" stroke="#000" stroke-width="1.1"/></g></g><ellipse cx="381.5" cy="630.5" rx="23.7" ry="13.9" transform="rotate(-60.5 381.5 630.5)" fill="none" stroke="#000" stroke-width="1.2"/>
<ellipse cx="384.1" cy="610.7" rx="44.9" ry="26.3" transform="rotate(-60.5 384.1 610.7)" fill="none" stroke="#000" stroke-width="1.1"/>
</g>
<ellipse cx="397.1" cy="618.1" rx="44.9" ry="26.3" transform="rotate(-60.5 397.1 618.1)" fill="none" stroke="#000" stroke-width="1.6"/>
<ellipse cx="282.4" cy="684.1" rx="44.9" ry="26.3" transform="rotate(-60.5 282.4 684.1)" fill="url(#h6g)" stroke="none" stroke-width="0"/>
<g clip-path="url(#h6c)">
<ellipse cx="269.4" cy="676.7" rx="44.9" ry="26.3" transform="rotate(-60.5 269.4 676.7)" fill="#c9c9c9" stroke="none" stroke-width="0"/>
<g clip-path="url(#h6bc)"><rect x="240" y="630" width="90" height="110" fill="#c9c9c9"/><path d="M240 668 L261.4 670.7 L292.6 689.6 L300 694 L318 640 L240 640 Z" fill="#363636"/><path d="M262 671 Q282 672.5 300 681 L305 660 Q285 657 266 662 Z" fill="#2e2e2e"/><path d="M262.8 670.7 Q282 672 297.6 679.7" fill="none" stroke="#000" stroke-width="1.1"/><path d="M261.4 670.7 L292.6 689.6" fill="none" stroke="#000" stroke-width="1.3"/><path d="M269.8 659.8 Q285 655 301.6 656.3" fill="none" stroke="#000" stroke-width="1.1"/><path d="M272 655 Q288 645 303 647 L303 651 Q288 650 274 659 Z" fill="#f6f6f6"/></g>
<ellipse cx="269.4" cy="676.7" rx="44.9" ry="26.3" transform="rotate(-60.5 269.4 676.7)" fill="none" stroke="#000" stroke-width="1.1"/>
</g>
<ellipse cx="282.4" cy="684.1" rx="44.9" ry="26.3" transform="rotate(-60.5 282.4 684.1)" fill="none" stroke="#000" stroke-width="1.6"/></g>
<path d="M715.5 179.0 H707.5 V318.0 H1339.5 V179.0 H1054.5" stroke="#dcdcdc" stroke-width="1.3" fill="none"/>
<text x="719.8" y="186.0" font-size="19" font-weight="400" fill="#000" stroke="#000" stroke-width="0.35" textLength="330.5" lengthAdjust="spacingAndGlyphs">Defeaturing (relative to component size)</text>
<rect x="781.5" y="228.5" width="505" height="6" fill="#e7eaea" stroke="#d6d6d6" stroke-width="1"/>
<rect x="789.1" y="206" width="1.2" height="6" fill="#b4b4b4"/>
<rect x="789.1" y="250" width="1.2" height="6" fill="#b4b4b4"/>
<rect x="838.0" y="207" width="1.2" height="5" fill="#b4b4b4"/>
<rect x="838.0" y="250" width="1.2" height="5" fill="#b4b4b4"/>
<rect x="886.9" y="207" width="1.2" height="5" fill="#b4b4b4"/>
<rect x="886.9" y="250" width="1.2" height="5" fill="#b4b4b4"/>
<rect x="935.8" y="207" width="1.2" height="5" fill="#b4b4b4"/>
<rect x="935.8" y="250" width="1.2" height="5" fill="#b4b4b4"/>
<rect x="984.7" y="207" width="1.2" height="5" fill="#b4b4b4"/>
<rect x="984.7" y="250" width="1.2" height="5" fill="#b4b4b4"/>
<rect x="1033.5" y="207" width="1.2" height="5" fill="#b4b4b4"/>
<rect x="1033.5" y="250" width="1.2" height="5" fill="#b4b4b4"/>
<rect x="1082.4" y="207" width="1.2" height="5" fill="#b4b4b4"/>
<rect x="1082.4" y="250" width="1.2" height="5" fill="#b4b4b4"/>
<rect x="1131.3" y="207" width="1.2" height="5" fill="#b4b4b4"/>
<rect x="1131.3" y="250" width="1.2" height="5" fill="#b4b4b4"/>
<rect x="1180.2" y="207" width="1.2" height="5" fill="#b4b4b4"/>
<rect x="1180.2" y="250" width="1.2" height="5" fill="#b4b4b4"/>
<rect x="1229.1" y="207" width="1.2" height="5" fill="#b4b4b4"/>
<rect x="1229.1" y="250" width="1.2" height="5" fill="#b4b4b4"/>
<rect x="1278.0" y="206" width="1.2" height="6" fill="#b4b4b4"/>
<rect x="1278.0" y="250" width="1.2" height="6" fill="#b4b4b4"/>
<rect x="781" y="214" width="16" height="33" fill="#0078d7"/>
<text x="779.3" y="290.0" font-size="19" font-weight="400" fill="#000" stroke="#000" stroke-width="0.35" textLength="24.6" lengthAdjust="spacingAndGlyphs">0%</text>
<text x="1026.5" y="290.0" font-size="19" font-weight="400" fill="#000" stroke="#000" stroke-width="0.35" textLength="24.4" lengthAdjust="spacingAndGlyphs">5%</text>
<text x="1260.3" y="290.5" font-size="19" font-weight="400" fill="#000" stroke="#000" stroke-width="0.35" textLength="34.4" lengthAdjust="spacingAndGlyphs">10%</text>
<path d="M715.5 340.0 H707.5 V479.0 H1339.5 V340.0 H825.5" stroke="#dcdcdc" stroke-width="1.3" fill="none"/>
<rect x="1337" y="433" width="5" height="23" fill="#f0f0f0"/>
<text x="719.9" y="346.8" font-size="19" font-weight="400" fill="#000" stroke="#000" stroke-width="0.35" textLength="102.4" lengthAdjust="spacingAndGlyphs">Element size</text>
<rect x="781.5" y="389.5" width="505" height="6" fill="#e7eaea" stroke="#d6d6d6" stroke-width="1"/>
<rect x="789.1" y="367" width="1.2" height="6" fill="#b4b4b4"/>
<rect x="789.1" y="411" width="1.2" height="6" fill="#b4b4b4"/>
<rect x="951.2" y="367" width="1.2" height="6" fill="#b4b4b4"/>
<rect x="951.2" y="411" width="1.2" height="6" fill="#b4b4b4"/>
<rect x="1115.2" y="367" width="1.2" height="6" fill="#b4b4b4"/>
<rect x="1115.2" y="411" width="1.2" height="6" fill="#b4b4b4"/>
<rect x="1278.0" y="367" width="1.2" height="6" fill="#b4b4b4"/>
<rect x="1278.0" y="411" width="1.2" height="6" fill="#b4b4b4"/>
<rect x="943" y="375" width="16" height="33" fill="#0078d7"/>
<text x="772.3" y="451.9" font-size="19" font-weight="400" fill="#000" stroke="#000" stroke-width="0.35" textLength="53.1" lengthAdjust="spacingAndGlyphs">coarse</text>
<text x="928.4" y="451.9" font-size="19" font-weight="400" fill="#000" stroke="#000" stroke-width="0.35" textLength="71.3" lengthAdjust="spacingAndGlyphs">standard</text>
<text x="1104.0" y="451.7" font-size="19" font-weight="400" fill="#000" stroke="#000" stroke-width="0.35" textLength="32.3" lengthAdjust="spacingAndGlyphs">fine</text>
<text x="1250.8" y="451.7" font-size="19" font-weight="400" fill="#000" stroke="#000" stroke-width="0.35" textLength="71.4" lengthAdjust="spacingAndGlyphs">very fine</text>
<path d="M715.5 501.0 H707.5 V593.0 H1339.5 V501.0 H768.5" stroke="#dcdcdc" stroke-width="1.3" fill="none"/>
<text x="720.0" y="508.1" font-size="19" font-weight="400" fill="#000" stroke="#000" stroke-width="0.35" textLength="45.2" lengthAdjust="spacingAndGlyphs">Mesh</text>
<circle cx="729" cy="532.3" r="9.3" fill="#ffffff" stroke="#333333" stroke-width="1.4"/>
<circle cx="729" cy="532.3" r="5.6" fill="#333333"/>
<text x="743.4" y="539.2" font-size="19" font-weight="400" fill="#000" stroke="#000" stroke-width="0.35" textLength="67.2" lengthAdjust="spacingAndGlyphs">uniform</text>
<circle cx="1049" cy="532.5" r="9.3" fill="#ffffff" stroke="#333333" stroke-width="1.4"/>
<text x="1063.7" y="539.0" font-size="19" font-weight="400" fill="#000" stroke="#000" stroke-width="0.35" textLength="108.1" lengthAdjust="spacingAndGlyphs">non-uniform</text>
<path d="M715.5 615.0 H707.5 V707.0 H1339.5 V615.0 H1001.5" stroke="#dcdcdc" stroke-width="1.3" fill="none"/>
<text x="719.6" y="622.1" font-size="19" font-weight="400" fill="#000" stroke="#000" stroke-width="0.35" textLength="277.9" lengthAdjust="spacingAndGlyphs">Element order of the tetrahedrons</text>
<circle cx="728.8" cy="646.5" r="9.3" fill="#ffffff" stroke="#333333" stroke-width="1.4"/>
<circle cx="728.8" cy="646.5" r="5.6" fill="#333333"/>
<text x="743.4" y="653.5" font-size="19" font-weight="400" fill="#000" stroke="#000" stroke-width="0.35" textLength="44.8" lengthAdjust="spacingAndGlyphs">linear</text>
<circle cx="1048.8" cy="646.4" r="9.3" fill="#ffffff" stroke="#333333" stroke-width="1.4"/>
<text x="1064.7" y="653.3" font-size="19" font-weight="400" fill="#000" stroke="#000" stroke-width="0.35" textLength="77.5" lengthAdjust="spacingAndGlyphs">quadratic</text>
<path d="M715.5 729.5 H707.5 V852.5 H1339.5 V729.5 H960.5" stroke="#dcdcdc" stroke-width="1.3" fill="none"/>
<rect x="1337" y="812" width="5" height="27" fill="#f0f0f0"/>
<text x="719.6" y="736.4" font-size="19" font-weight="400" fill="#000" stroke="#000" stroke-width="0.35" textLength="237.8" lengthAdjust="spacingAndGlyphs">In case of meshing problems</text>
<rect x="719.25" y="751.55" width="18.8" height="18.8" fill="#ffffff" stroke="#333333" stroke-width="1.5"/>
<text x="744.4" y="768.1" font-size="19" font-weight="400" fill="#000" stroke="#000" stroke-width="0.35" textLength="207.1" lengthAdjust="spacingAndGlyphs">Allow surface corrections</text>
<text x="718.5" y="800.0" font-size="19" font-weight="400" fill="#000" stroke="#000" stroke-width="0.35" textLength="158.0" lengthAdjust="spacingAndGlyphs">Meshing algorithm</text>
<circle cx="728.8" cy="824.9" r="9.3" fill="#ffffff" stroke="#333333" stroke-width="1.4"/>
<circle cx="728.8" cy="824.9" r="5.6" fill="#333333"/>
<text x="744.4" y="831.4" font-size="19" font-weight="400" fill="#000" stroke="#000" stroke-width="0.35" textLength="49.7" lengthAdjust="spacingAndGlyphs">Type 1</text>
<circle cx="978.7" cy="824.9" r="9.3" fill="#ffffff" stroke="#333333" stroke-width="1.4"/>
<text x="994.8" y="831.4" font-size="19" font-weight="400" fill="#000" stroke="#000" stroke-width="0.35" textLength="50.4" lengthAdjust="spacingAndGlyphs">Type 2</text>
<circle cx="1228.3" cy="824.9" r="9.3" fill="#ffffff" stroke="#333333" stroke-width="1.4"/>
<text x="1244.8" y="831.4" font-size="19" font-weight="400" fill="#000" stroke="#000" stroke-width="0.35" textLength="50.7" lengthAdjust="spacingAndGlyphs">Type 3</text>
<rect x="716.75" y="873.75" width="229.0" height="33.5" fill="#e1e1e1" stroke="#adadad" stroke-width="1.5"/>
<text x="741.3" y="896.9" font-size="19" font-weight="400" fill="#000" stroke="#000" stroke-width="0.35" textLength="178.9" lengthAdjust="spacingAndGlyphs">Preview surface mesh</text>
<rect x="1099.25" y="873.75" width="229.0" height="33.5" fill="#e1e1e1" stroke="#adadad" stroke-width="1.5"/>
<text x="1128.2" y="897.8" font-size="19" font-weight="400" fill="#000" stroke="#000" stroke-width="0.35" textLength="169.4" lengthAdjust="spacingAndGlyphs">Create volume mesh</text>
<path d="M715.5 929.5 H707.5 V998.5 H1339.5 V929.5 H905.5" stroke="#dcdcdc" stroke-width="1.3" fill="none"/>
<text x="719.6" y="935.9" font-size="19" font-weight="400" fill="#000" stroke="#000" stroke-width="0.35" textLength="181.5" lengthAdjust="spacingAndGlyphs">Element quality check</text>
<rect x="719.25" y="957.95" width="18.8" height="18.8" fill="#ffffff" stroke="#333333" stroke-width="1.5"/>
<text x="743.4" y="973.2" font-size="19" font-weight="400" fill="#000" stroke="#000" stroke-width="0.35" textLength="253.1" lengthAdjust="spacingAndGlyphs">Perform after volume meshing</text>
<rect x="1223.75" y="1048.75" width="139.5" height="34.0" fill="#e1e1e1" stroke="#adadad" stroke-width="1.5"/>
<text x="1266.0" y="1072.7" font-size="19" font-weight="400" fill="#000" stroke="#000" stroke-width="0.35" textLength="56.5" lengthAdjust="spacingAndGlyphs">Cancel</text>
<rect x="927.1" y="899" width="6" height="70" fill="#00ade8"/>
<circle cx="930.1" cy="899" r="9" fill="#00ade8"/>
<circle cx="930.1" cy="990.5" r="35.2" fill="#00ade8"/>
<rect x="1307.2" y="899" width="6" height="70" fill="#00ade8"/>
<circle cx="1310.2" cy="899" r="9" fill="#00ade8"/>
<circle cx="1310.2" cy="990.5" r="35.2" fill="#00ade8"/>
<path d="M931.8 978.1 L933.6 978.1 L933.6 1004.9 L929.9 1004.9 L929.9 982.3 L924.1 985.2 L924.1 981.6 Z" fill="#ffffff"/>
<path d="M1303.8 982.6 C1306 980.5 1308 979.6 1310.2 979.6 C1314.2 979.6 1316.3 982.3 1316.3 986 C1316.3 989.8 1314 992.2 1310.3 994.6 C1305.5 997.8 1303.4 1000 1303.4 1002.5 L1303.4 1003.35 M1301.9 1003.35 L1318.9 1003.35" fill="none" stroke="#ffffff" stroke-width="3.1"/>
<path d="M790 44 L790 66.5 L794.8 62 L798.3 69.6 L802.6 67.4 L799.4 60.6 L806.2 60.4 Z" fill="#ffffff" stroke="#000" stroke-width="1.4" stroke-linejoin="miter"/>
</svg>
</body></html>
